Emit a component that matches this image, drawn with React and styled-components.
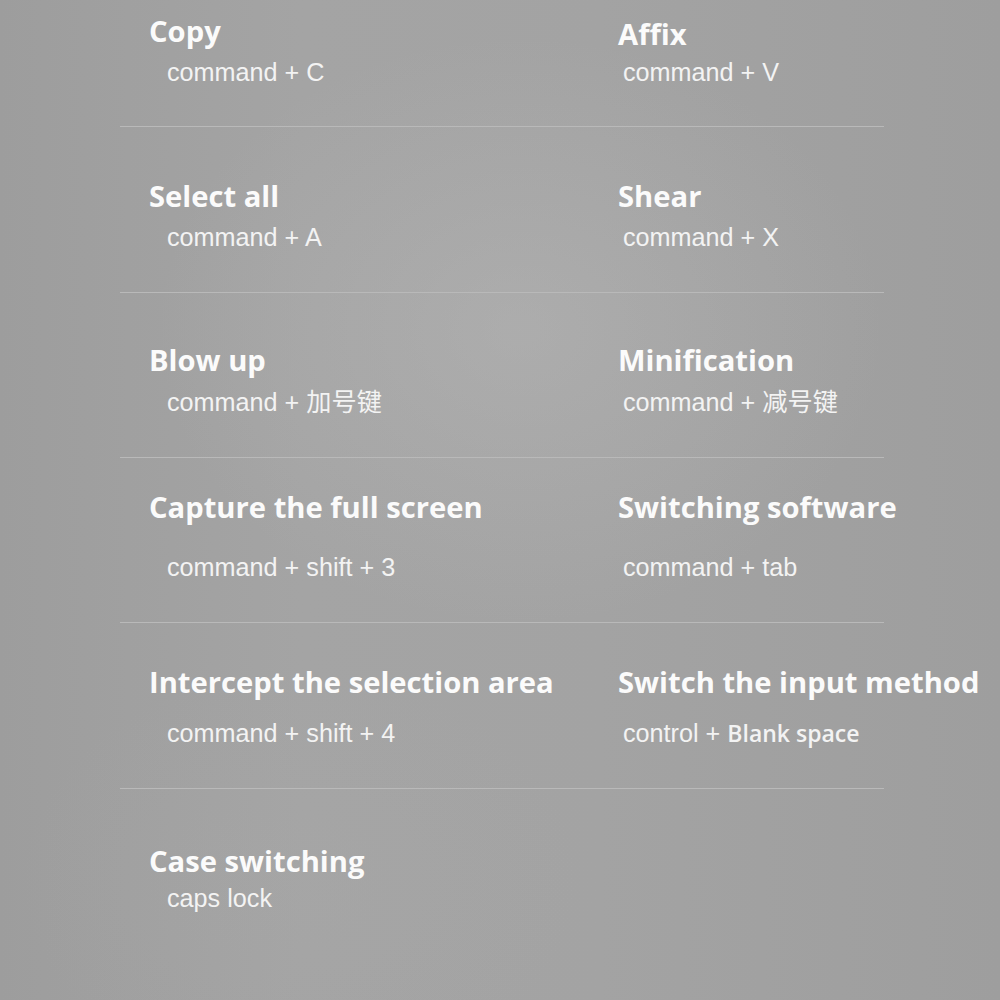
import React from "react";
import styled, { createGlobalStyle } from "styled-components";

const Global = createGlobalStyle`
  html, body { margin: 0; padding: 0; }
  body { background: #a2a2a2; overflow: hidden; }
`;

const Page = styled.div`
  width: 1000px;
  height: 1000px;
  overflow: hidden;
  background:
    radial-gradient(ellipse 520px 420px at 520px 330px, rgba(190,190,190,0.35), rgba(190,190,190,0) 70%),
    radial-gradient(ellipse 400px 300px at 300px 880px, rgba(170,170,170,0.25), rgba(170,170,170,0) 70%),
    linear-gradient(90deg, #9d9d9d 0%, #a4a4a4 30%, #a3a3a3 60%, #9e9e9e 100%);
`;

const List = styled.div`
  margin-left: 120px;
  width: 764px;
`;

const Row = styled.div`
  display: grid;
  grid-template-columns: 469px 1fr;
  height: ${(p) => p.$h}px;
  border-bottom: ${(p) => (p.$last ? "none" : "1px solid #b9b9b9")};
`;

const Cell = styled.div`
  padding-left: 29px;
  padding-top: ${(p) => p.$pad}px;
  display: flex;
  flex-direction: column;
  gap: ${(p) => p.$gap}px;
  white-space: nowrap;
`;

const Title = styled.div`
  font-family: "Open Sans", "Noto Sans", sans-serif;
  font-weight: 700;
  font-size: 29.2px;
  line-height: 36px;
  color: #fbfbfb;
`;

const Keys = styled.div`
  font-family: "Liberation Sans", Arial, "Noto Sans CJK SC", sans-serif;
  font-size: 25.2px;
  line-height: 30px;
  color: #f3f3f3;
  padding-left: ${(p) => p.$indent}px;
`;

const Strong = styled.span`
  font-family: "Open Sans", sans-serif;
  font-weight: 600;
  font-size: 23px;
`;

const rows = [
  {
    h: 126,
    cells: [
      { title: "Copy", keys: "command + C", pad: 13, gap: 8 },
      { title: "Affix", keys: "command + V", pad: 16, gap: 5 },
    ],
  },
  {
    h: 165,
    cells: [
      { title: "Select all", keys: "command + A", pad: 51, gap: 8 },
      { title: "Shear", keys: "command + X", pad: 51, gap: 8 },
    ],
  },
  {
    h: 164,
    cells: [
      { title: "Blow up", keys: "command + 加号键", pad: 49, gap: 9 },
      { title: "Minification", keys: "command + 减号键", pad: 49, gap: 9 },
    ],
  },
  {
    h: 164,
    cells: [
      { title: "Capture the full screen", keys: "command + shift + 3", pad: 31, gap: 27 },
      { title: "Switching software", keys: "command + tab", pad: 31, gap: 27 },
    ],
  },
  {
    h: 165,
    cells: [
      { title: "Intercept the selection area", keys: "command + shift + 4", pad: 41, gap: 18 },
      {
        title: "Switch the input method",
        keys: (
          <>
            control + <Strong>Blank space</Strong>
          </>
        ),
        pad: 41,
        gap: 18,
      },
    ],
  },
  {
    h: 211,
    last: true,
    cells: [{ title: "Case switching", keys: "caps lock", pad: 54, gap: 4 }],
  },
];

export default function App() {
  return (
    <>
      <Global />
      <Page>
        <List>
          {rows.map((r, i) => (
            <Row key={i} $h={r.h} $last={r.last}>
              {r.cells.map((c, j) => (
                <Cell key={j} $pad={c.pad} $gap={c.gap}>
                  <Title>{c.title}</Title>
                  <Keys $indent={j === 0 ? 18 : 5}>{c.keys}</Keys>
                </Cell>
              ))}
            </Row>
          ))}
        </List>
      </Page>
    </>
  );
}
